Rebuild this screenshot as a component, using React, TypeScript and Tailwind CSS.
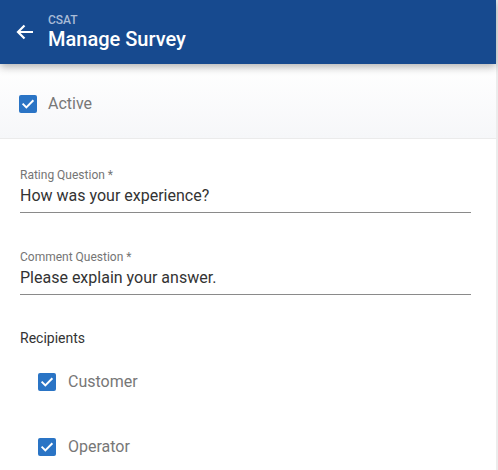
import React from "react";

function Check({ className = "" }: { className?: string }) {
  return (
    <span className={`flex h-[18px] w-[18px] items-center justify-center rounded-[2px] bg-[#2a74c5] ${className}`}>
      <svg viewBox="0 0 24 24" className="h-[16px] w-[16px]" fill="none" stroke="white" strokeWidth="3" strokeLinecap="square">
        <path d="M5 12.5l4.5 4.5L19 7.5" />
      </svg>
    </span>
  );
}

function Field({ label, value }: { label: string; value: string }) {
  return (
    <div className="flex flex-col border-b border-[#8a8a8a]">
      <span className="text-[12px] leading-[16px] text-[#757575]">{label}</span>
      <span className="mt-[3px] pb-[6px] text-[16px] leading-[20px] text-[#333333]">{value}</span>
    </div>
  );
}

export default function App() {
  return (
    <div className="flex h-[470px] w-[498px] overflow-hidden bg-white" style={{ fontFamily: "Roboto, 'Noto Sans', sans-serif" }}>
      <div className="flex w-[496px] flex-col">
        <header className="relative z-10 flex h-16 shrink-0 items-center bg-[#174a8f] shadow-[0_3px_8px_rgba(0,0,0,0.3)]">
          <svg viewBox="0 0 24 24" className="ml-[13px] h-6 w-6" fill="none" stroke="white" strokeWidth="2.2">
            <path d="M20 12H5M11.5 5.5L5 12l6.5 6.5" />
          </svg>
          <div className="ml-[11px] flex flex-col">
            <span className="text-[12px] font-medium leading-[14px] text-[#a9bcd7]">CSAT</span>
            <span className="text-[20px] font-medium leading-[24px] text-white">Manage Survey</span>
          </div>
        </header>
        <div className="flex h-[75px] shrink-0 items-center border-b border-[#ebebeb] bg-gradient-to-b from-white to-[#f6f7f9] pl-[19px] pt-[6px]">
          <Check />
          <span className="ml-[11px] text-[16px] text-[#777777]">Active</span>
        </div>
        <div className="flex flex-col pl-5 pr-[25px] pt-[28px]">
          <Field label="Rating Question *" value="How was your experience?" />
          <div className="h-[36px]" />
          <Field label="Comment Question *" value="Please explain your answer." />
          <span className="mt-[34px] text-[14px] leading-[18px] text-[#333333]">Recipients</span>
          <div className="ml-[18px] mt-[23px] flex items-center">
            <Check />
            <span className="ml-[12px] text-[16px] text-[#777777]">Customer</span>
          </div>
          <div className="ml-[18px] mt-[41px] flex items-center">
            <Check />
            <span className="ml-[12px] text-[16px] text-[#777777]">Operator</span>
          </div>
        </div>
      </div>
      <div className="h-full w-[2px] bg-[#ececec]" />
    </div>
  );
}
